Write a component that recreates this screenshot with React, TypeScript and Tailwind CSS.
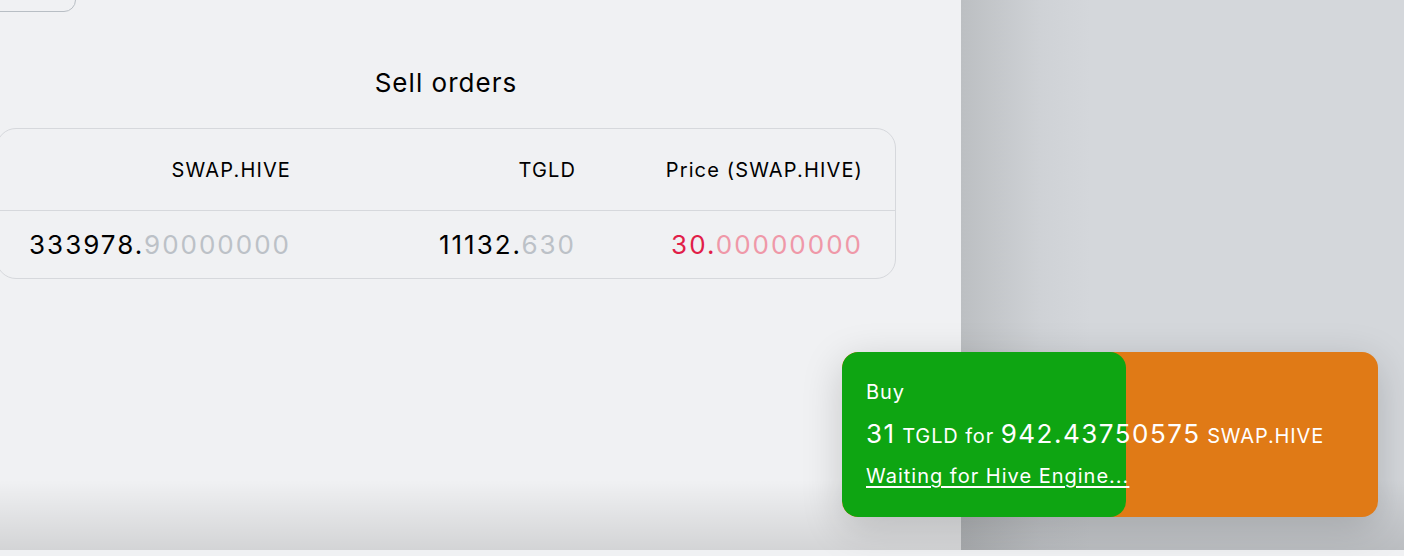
import React from "react";

const font = { fontFamily: "Inter, 'Noto Sans', sans-serif" };

function Num({ int, frac, red }: { int: string; frac: string; red?: boolean }) {
  return (
    <span>
      <span className={red ? "text-[#e11d48]" : "text-black"}>{int}.</span>
      <span className={red ? "text-[#ef98a8]" : "text-[#bcc1c7]"}>{frac}</span>
    </span>
  );
}

export default function App() {
  return (
    <div className="relative w-[1404px] h-[556px] overflow-hidden bg-[#f0f1f3]" style={font}>
      <div className="flex h-[550px]">
        <div className="w-[961px] shrink-0 bg-[#f0f1f3] flex flex-col">
          <div className="ml-[-30px] mt-[-40px] h-[52px] w-[106px] rounded-xl border-[1.5px] border-[#b8bec4]" />
          <h2 className="mt-[56px] w-[900px] ml-[-4px] text-center text-[26px] leading-[30px] tracking-[0.04em] text-black">
            Sell orders
          </h2>
          <div className="mt-[30px] ml-[-4px] w-[900px] rounded-[20px] border-[1.5px] border-[#d6d8dc]">
            <div className="grid grid-cols-[294px_285px_287px] pr-[34px] h-[82px] items-center border-b-[1.5px] border-[#d6d8dc] text-[20px] tracking-[0.057em] text-black">
              <div className="text-right">SWAP.HIVE</div>
              <div className="text-right">TGLD</div>
              <div className="text-right">Price (SWAP.HIVE)</div>
            </div>
            <div className="grid grid-cols-[294px_285px_287px] pr-[34px] h-[67px] items-center text-[26px] tracking-[0.077em]">
              <div className="text-right"><Num int="333978" frac="90000000" /></div>
              <div className="text-right"><Num int="11132" frac="630" /></div>
              <div className="text-right"><Num int="30" frac="00000000" red /></div>
            </div>
          </div>
        </div>
        <div className="flex-1 bg-[linear-gradient(to_right,#bcbfc2_0px,#cfd2d6_80px,#d4d7db_130px)]" />
      </div>
      <div className="pointer-events-none absolute left-0 right-0 bottom-[6px] h-[70px] bg-[linear-gradient(to_bottom,rgba(0,0,0,0),rgba(0,0,0,0.12))]" />

      <div className="absolute left-[842px] top-[352px] w-[536px] h-[165px] rounded-2xl bg-[#e07a16] overflow-hidden shadow-[0_10px_40px_rgba(0,0,0,0.18)]">
        <div className="absolute left-0 top-0 bottom-0 w-[284px] rounded-2xl bg-[#0ea512]" />
        <div className="relative pl-[24px] pt-[26px] text-white tracking-[0.055em]">
          <div className="text-[20px] leading-[28px]">Buy</div>
          <div className="mt-[12px] leading-[32px] whitespace-nowrap">
            <span className="text-[26px] tracking-[0.058em]">31</span>
            <span className="text-[20px]"> TGLD for </span>
            <span className="text-[26px] tracking-[0.058em]">942.43750575</span>
            <span className="text-[20px]"> SWAP.HIVE</span>
          </div>
          <div className="mt-[9px] text-[20px] leading-[28px] tracking-[0.05em] underline underline-offset-[3px]">Waiting for Hive Engine...</div>
        </div>
      </div>
    </div>
  );
}
